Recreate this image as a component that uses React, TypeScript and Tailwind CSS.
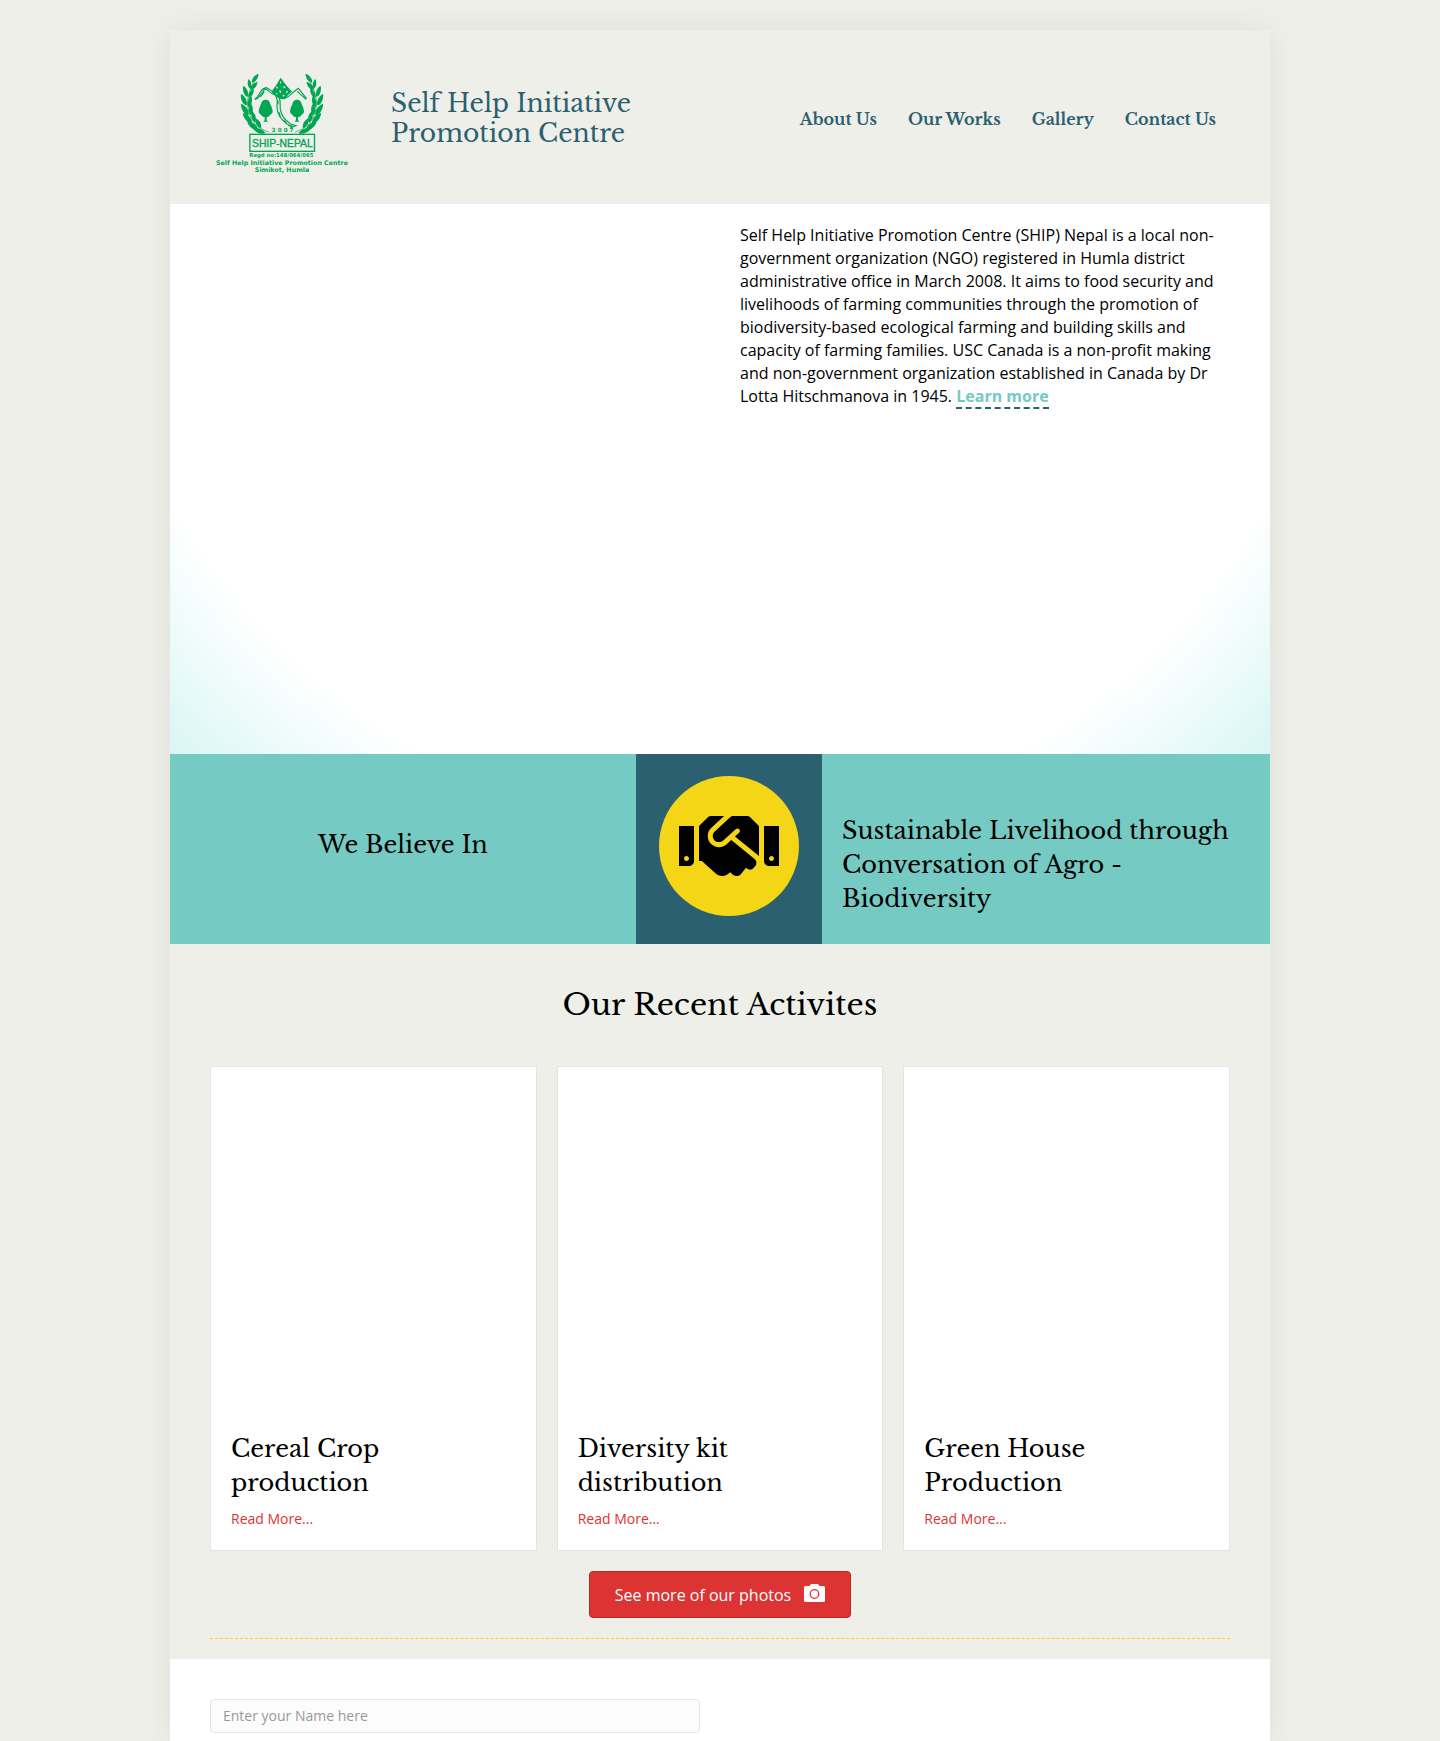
import { FaHandshake } from "react-icons/fa";

const navItems = ["About Us", "Our Works", "Gallery", "Contact Us"];
const activities = ["Cereal Crop production", "Diversity kit distribution", "Green House Production"];

const serif = "font-['Libre_Baskerville','Baskervville','Liberation_Serif',serif]";

// Leaves of the left laurel branch: centre, rotation and scale.
const leaves: [number, number, number, number][] = [
  [136, 31, 38, 1.1], [119, 48, -8, 1], [132, 54, 42, 1.1],
  [107, 70, -18, 1.2], [124, 76, 28, 1.1],
  [102, 95, -24, 1.3], [120, 101, 14, 1.2],
  [105, 124, -32, 1.4], [123, 124, 0, 1.2],
  [113, 150, -40, 1.4], [131, 146, -14, 1.2],
  [129, 173, -52, 1.4], [145, 165, -28, 1.2],
  [148, 188, -70, 1.3],
];

function Branch() {
  return (
    <g>
      <path d="M141 30C108 70 102 126 134 166c10 12 24 20 42 26" fill="none" stroke="#00a651" strokeWidth="2" />
      {leaves.map(([x, y, r, s], i) => (
        <path key={i} d="M0 15C-8 8-7-6-1-15 6-7 7 6 0 15z" transform={`translate(${x} ${y}) rotate(${r}) scale(${s})`} />
      ))}
    </g>
  );
}

function Tree({ x }: { x: number }) {
  return (
    <path
      transform={`translate(${x} 95)`}
      d="M0 0c8 0 13 5 14 14 3 6 6 12 7 21 0 5-3 8-7 10-3 5-6 7-11 7v10l5 4h-16l5-4v-10c-5 0-8-2-11-7-4-2-7-5-7-10 1-9 4-15 7-21C-13 5-8 0 0 0z"
    />
  );
}

function Logo() {
  return (
    <svg viewBox="0 0 435 330" className="h-[110px] w-[145px]" fill="#00a651" role="img" aria-label="SHIP-Nepal">
      <Branch />
      <g transform="translate(432 0) scale(-1 1)">
        <Branch />
      </g>
      <path d="M212 29l16 22 18 20-12 10-9 13-17-2-12-9-12-12 15-20z" />
      <path
        d="M211 40l4 3-5 5zM198 57l6-1-3 7zM220 54l7 3-6 5zM208 66l6 3-4 8zM230 68l5 2-6 7zM217 80l7 1-3 6zM198 74l5 3-3 3z"
        fill="#eeefe9"
      />
      <path
        d="M134 94l7-2c8-4 10-14 17-19 3-7 6-10 11-9 10 8 18 14 28 18M134 93c13-5 11-14 18-22 5-8 9-11 17-12l16 9M151 87l12-15M227 90c11-4 18-14 27-21l11-8 5 6 20 25M262 70l13 12 13 12"
        fill="none" stroke="#00a651" strokeWidth="3.5"
      />
      <path
        d="M197 84c8 9 4 22 4 34 1 23 12 35 31 51l18 8M208 91c5 12 1 20 3 33 3 20 14 33 31 44l16 5-18 8"
        fill="none" stroke="#00a651" strokeWidth="3.5"
      />
      <path d="M203 96l1 13M206 132l5 14M218 155l11 9M235 173l14 2" stroke="#00a651" strokeWidth="4" />
      <Tree x={167} />
      <Tree x={261} />
      <text x="218" y="193" textAnchor="middle" fontSize="17" fontWeight="700" fontFamily="DejaVu Sans">2 0 0 7</text>
      <rect x="119.5" y="199" width="194" height="51" fill="none" stroke="#00a651" strokeWidth="4" />
      <text x="217" y="237" textAnchor="middle" fontSize="31" fontFamily="Liberation Sans" className="stroke-[#00a651] stroke-1">SHIP-NEPAL</text>
      <text x="214" y="267" textAnchor="middle" fontSize="16" fontWeight="700" fontFamily="DejaVu Sans">Regd no:148/064/065</text>
      <text x="216" y="291" textAnchor="middle" fontSize="19" fontWeight="700" fontFamily="DejaVu Sans">Self Help Initiative Promotion Centre</text>
      <text x="216" y="313" textAnchor="middle" fontSize="19" fontWeight="700" fontFamily="DejaVu Sans">Simikot, Humla</text>
    </svg>
  );
}

function CameraIcon() {
  return (
    <svg viewBox="0 0 21 18" className="mb-1 h-[18px] w-[21px]" aria-hidden="true">
      <path d="M1.5 2H5q1 0 1.300-1T7.500 0h6q.9 0 1.200 1T16 2h3.500Q21 2 21 3.500v13q0 1.500-1.500 1.500h-18Q0 18 0 16.500v-13Q0 2 1.500 2z" fill="#fff" />
      <circle cx="10.500" cy="10" r="4.300" fill="none" stroke="#dd3333" strokeWidth="1.300" />
    </svg>
  );
}

export default function App() {
  return (
    <div className="min-h-screen bg-[#eeefe9] pt-[30px] font-['Open_Sans',sans-serif] text-base text-black">
      <div className="mx-auto max-w-[1100px] bg-[#eeefe9] shadow-[0_0_30px_rgba(0,0,0,0.07)]">
        <header className="flex items-center px-10 pt-[38px] pb-[26px]">
          <a href="#home" className="shrink-0"><Logo /></a>
          <h1 className={`${serif} ml-9 w-64 pb-2 text-[25px] leading-[30px] text-[#2b6070]`}>
            Self Help Initiative Promotion Centre
          </h1>
          <nav className="mr-[14px] ml-auto flex gap-[31px] pb-2">
            {navItems.map((item) => (
              <a key={item} href="#nav" className={`${serif} text-base font-bold text-[#2b6070]`}>{item}</a>
            ))}
          </nav>
        </header>

        <section className="grid min-h-[550px] grid-cols-2 bg-[radial-gradient(circle_at_50%_0,#ffffff_80%,#d8f6f5_100%)]">
          <div />
          <p className="px-5 pt-5 pr-9 leading-[23px]">
            Self Help Initiative Promotion Centre (SHIP) Nepal is a local non-government organization (NGO)
            registered in Humla district administrative office in March 2008. It aims to food security and
            livelihoods of farming communities through the promotion of biodiversity-based ecological farming and
            building skills and capacity of farming families. USC Canada is a non-profit making and non-government
            organization established in Canada by Dr Lotta Hitschmanova in 1945.{" "}
            <a href="#learn" className="inline-block border-b-2 border-dashed border-[#2b6070] pb-px leading-5 font-bold text-[#75cac3]">Learn more</a>
          </p>
        </section>

        <section className="flex min-h-[190px] bg-[#75cac3]">
          <h2 className={`${serif} flex w-[466px] items-center justify-center pb-2 text-2xl leading-[34px]`}>We Believe In</h2>
          <div className="flex w-[186px] shrink-0 justify-center bg-[#2b6070] pt-[22px]">
            <div className="flex size-[140px] items-center justify-center rounded-full bg-[#f4d616]">
              <FaHandshake className="h-20 w-[100px]" />
            </div>
          </div>
          <h2 className={`${serif} flex flex-1 items-end px-5 pb-7 text-2xl leading-[34px]`}>
            Sustainable Livelihood through Conversation of Agro - Biodiversity
          </h2>
        </section>

        <section className="px-10 pb-5">
          <h2 className={`${serif} pt-10 pb-10 text-center text-3xl leading-[42px]`}>Our Recent Activites</h2>
          <div className="grid grid-cols-3 gap-5">
            {activities.map((title) => (
              <article key={title} className="border border-[#e4e4e4] bg-white px-5 pt-[365px] pb-[21px]">
                <h3 className={`${serif} w-48 text-2xl leading-[34px]`}>{title}</h3>
                <a href="#more" className="mt-2 block text-sm leading-[21px] text-[#dd3333]">Read More...</a>
              </article>
            ))}
          </div>
          <div className="mt-5 flex justify-center">
            <button type="button" className="flex h-[47px] items-center gap-[13px] rounded border border-[#b92424] bg-[#dd3333] px-[25px] text-base text-white">
              See more of our photos
              <CameraIcon />
            </button>
          </div>
          <hr className="mt-5 border-t border-dashed border-[#f4d616]" />
        </section>

        <form className="grid grid-cols-2 bg-white px-10 pt-10 pb-2">
          <input
            type="text" aria-label="Name" placeholder="Enter your Name here"
            className="h-[34px] w-[490px] max-w-full rounded border border-[#e6e6e6] bg-[#fcfcfc] px-3 pb-px text-sm placeholder:text-[#999999]"
          />
        </form>
      </div>
    </div>
  );
}
